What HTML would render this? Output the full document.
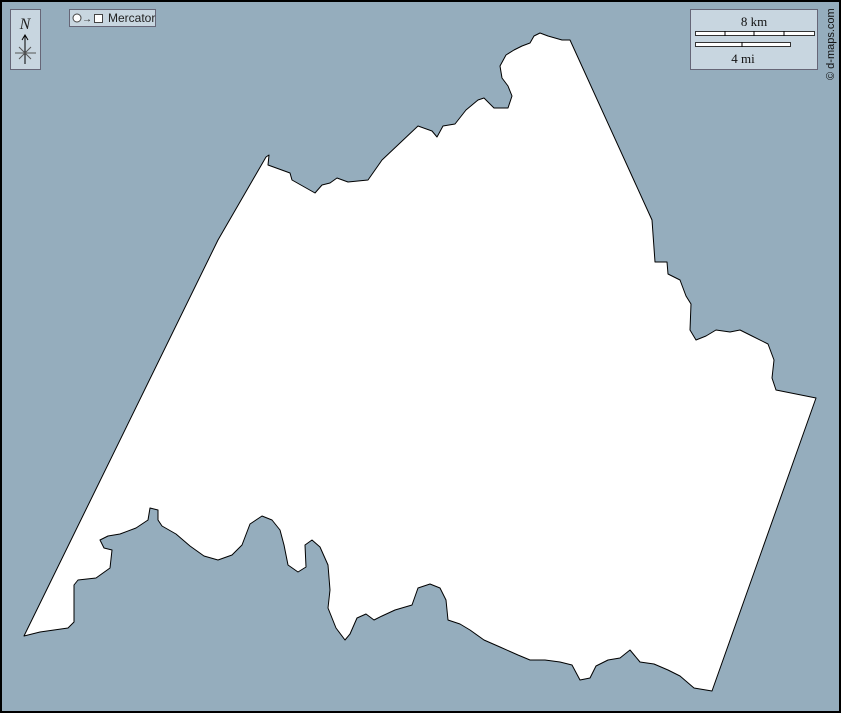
<!DOCTYPE html>
<html><head><style>
html,body{margin:0;padding:0;}
body{width:841px;height:713px;overflow:hidden;background:#000;}
</style></head><body>
<svg width="841" height="713" viewBox="0 0 841 713" xmlns="http://www.w3.org/2000/svg" style="display:block">
<rect x="0" y="0" width="841" height="713" fill="#000"/>
<rect x="2" y="2" width="837" height="709" fill="#95adbd"/>
<path d="M24,636 L218,240 L266,157 L269,155 L268,165 L290,173 L292,180 L315,193 L322,185 L330,183 L337,178 L348,182 L368,180 L382,160 L400,143 L418,126 L432,131 L437,137 L443,126 L455,124 L466,110 L478,100 L484,98 L494,108 L508,108 L512,96 L508,86 L502,78 L500,66 L506,55 L514,50 L522,46 L530,43 L534,36 L540,33 L548,36 L562,40 L570,40 L652,220 L655,262 L667,262 L668,274 L680,280 L686,296 L691,304 L690,330 L696,340 L706,336 L716,330 L730,332 L740,330 L752,336 L768,344 L774,360 L772,378 L776,390 L816,398 L712,691 L694,688 L680,676 L668,670 L654,664 L640,662 L630,650 L620,658 L608,660 L596,666 L590,678 L580,680 L572,665 L560,662 L545,660 L530,660 L518,655 L500,647 L484,640 L470,630 L460,624 L448,620 L446,600 L440,588 L430,584 L418,588 L412,605 L395,610 L382,616 L374,620 L366,614 L357,618 L350,634 L345,640 L336,628 L328,608 L330,590 L328,565 L320,547 L312,540 L305,545 L306,567 L298,572 L288,565 L284,545 L280,530 L272,520 L262,516 L250,524 L242,545 L232,555 L218,560 L204,556 L190,546 L176,534 L162,526 L158,520 L158,510 L150,508 L148,520 L136,528 L120,534 L108,536 L100,540 L104,548 L112,550 L110,568 L96,578 L78,580 L74,585 L74,622 L68,628 L40,632 Z" fill="#fff" stroke="#000" stroke-width="1" stroke-linejoin="round"/>
<!-- compass -->
<rect x="10.5" y="9.5" width="30" height="60" fill="#c8d6e0" stroke="#667"/>
<text x="25" y="29" font-family="Liberation Serif,serif" font-style="italic" font-size="16" text-anchor="middle" fill="#222">N</text>
<line x1="25" y1="36" x2="25" y2="64" stroke="#000"/>
<path d="M22,40 L25,35 L28,40" fill="none" stroke="#000"/>
<line x1="15" y1="53" x2="36" y2="53" stroke="#555"/>
<line x1="19" y1="47" x2="31" y2="59" stroke="#555"/>
<line x1="31" y1="47" x2="19" y2="59" stroke="#555"/>
<!-- projection -->
<rect x="69.5" y="9.5" width="86" height="17" fill="#c8d6e0" stroke="#667"/>
<circle cx="77" cy="18" r="4" fill="#fff" stroke="#444"/>
<text x="82" y="22" font-family="Liberation Sans,sans-serif" font-size="10" fill="#222">→</text>
<rect x="94.5" y="14.5" width="8" height="8" fill="#fff" stroke="#444"/>
<text x="108" y="22" font-family="Liberation Sans,sans-serif" font-size="12" fill="#222">Mercator</text>
<!-- scale -->
<rect x="690.5" y="9.5" width="127" height="60" fill="#c8d6e0" stroke="#667"/>
<text x="754" y="26" font-family="Liberation Serif,serif" font-size="13" text-anchor="middle" fill="#111">8 km</text>
<rect x="695.5" y="31.5" width="119" height="4" fill="#fff" stroke="#333"/>
<line x1="725" y1="31" x2="725" y2="36" stroke="#000"/>
<line x1="754" y1="31" x2="754" y2="36" stroke="#000"/>
<line x1="784" y1="31" x2="784" y2="36" stroke="#000"/>
<rect x="695.5" y="42.5" width="95" height="4" fill="#fff" stroke="#333"/>
<line x1="742" y1="42" x2="742" y2="47" stroke="#000"/>
<text x="743" y="63" font-family="Liberation Serif,serif" font-size="13" text-anchor="middle" fill="#111">4 mi</text>
<text transform="translate(834,80) rotate(-90)" font-family="Liberation Sans,sans-serif" font-size="11" fill="#111">© d-maps.com</text>
</svg>
</body></html>
